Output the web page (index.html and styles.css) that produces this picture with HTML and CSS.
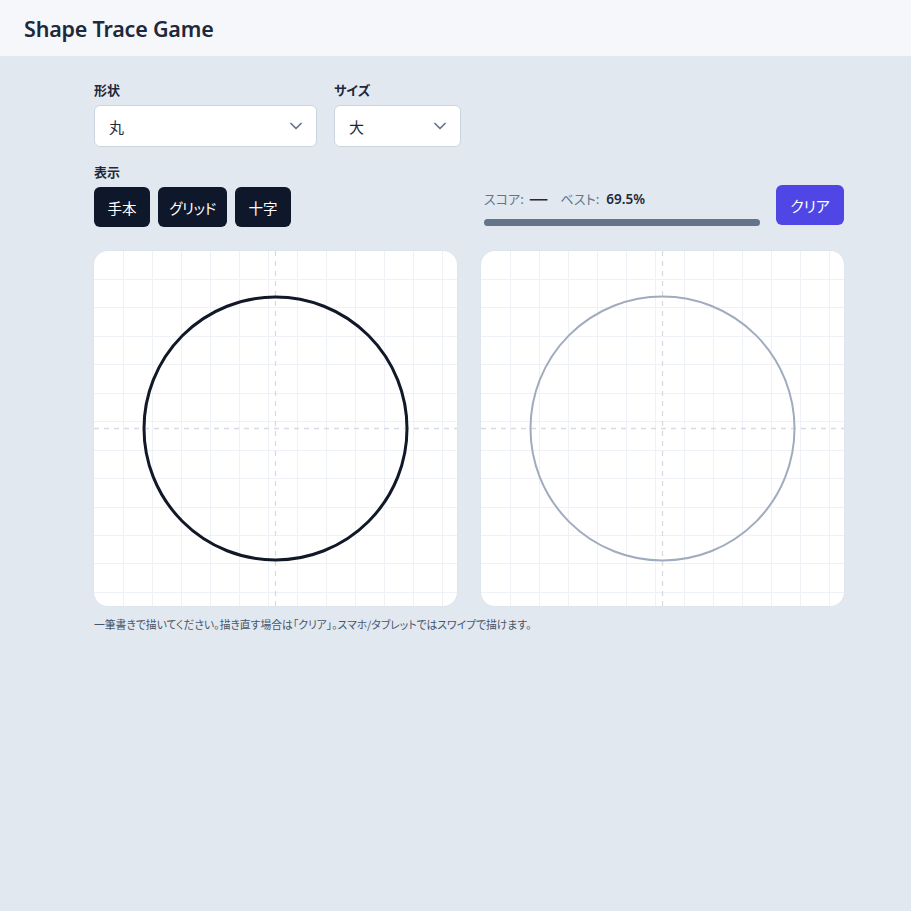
FILE: index.html
```html
<!DOCTYPE html>
<html lang="ja">
<head>
<meta charset="utf-8">
<title>Shape Trace Game</title>
<link rel="stylesheet" href="styles.css">
</head>
<body>
<header class="topbar"><h1 class="title">Shape Trace Game</h1></header>
<main class="wrap">
  <div class="row-fields">
    <div class="field">
      <label class="label">形状</label>
      <div class="select sel-shape"><span>丸</span>
        <svg class="chev" width="14" height="14" viewBox="0 0 14 14"><path d="M2 4.5 L7 9.5 L12 4.5" fill="none" stroke="#64748b" stroke-width="1.7" stroke-linecap="round" stroke-linejoin="round"/></svg>
      </div>
    </div>
    <div class="field">
      <label class="label">サイズ</label>
      <div class="select sel-size"><span>大</span>
        <svg class="chev" width="14" height="14" viewBox="0 0 14 14"><path d="M2 4.5 L7 9.5 L12 4.5" fill="none" stroke="#64748b" stroke-width="1.7" stroke-linecap="round" stroke-linejoin="round"/></svg>
      </div>
    </div>
  </div>
  <div class="row-controls">
    <div class="field">
      <label class="label">表示</label>
      <div class="toggles">
        <button class="tog">手本</button>
        <button class="tog tog-kana">グリッド</button>
        <button class="tog">十字</button>
      </div>
    </div>
    <div class="right">
      <div class="score">
        <div class="score-line"><span class="muted">スコア:</span><span class="dash">—</span><span class="muted">ベスト:</span><span class="best">69.5%</span></div>
        <div class="bar"></div>
      </div>
      <button class="clear">クリア</button>
    </div>
  </div>
  <div class="boards">
    <div class="board">
      <svg class="grid" width="363" height="355" viewBox="0 0 363 355">
        <g stroke="#eef1f5" stroke-width="1">
          <path d="M29.5 0V355M58.5 0V355M87.5 0V355M116.5 0V355M145.5 0V355M174.5 0V355M203.5 0V355M232.5 0V355M261.5 0V355M290.5 0V355M319.5 0V355M348.5 0V355"/>
          <path d="M0 28.5H363M0 56.5H363M0 85.5H363M0 113.5H363M0 142.5H363M0 170.5H363M0 199.5H363M0 227.5H363M0 256.5H363M0 284.5H363M0 312.5H363M0 341.5H363"/>
        </g>
        <g stroke="#d6dbe3" stroke-width="1.3" stroke-dasharray="5 5">
          <path d="M181.5 0V355"/>
          <path d="M0 177.5H363"/>
        </g>
        <circle cx="181.5" cy="177.5" r="131.5" fill="none" stroke="#111827" stroke-width="3"/>
      </svg>
    </div>
    <div class="board">
      <svg class="grid" width="363" height="355" viewBox="0 0 363 355">
        <g stroke="#eef1f5" stroke-width="1">
          <path d="M29.5 0V355M58.5 0V355M87.5 0V355M116.5 0V355M145.5 0V355M174.5 0V355M203.5 0V355M232.5 0V355M261.5 0V355M290.5 0V355M319.5 0V355M348.5 0V355"/>
          <path d="M0 28.5H363M0 56.5H363M0 85.5H363M0 113.5H363M0 142.5H363M0 170.5H363M0 199.5H363M0 227.5H363M0 256.5H363M0 284.5H363M0 312.5H363M0 341.5H363"/>
        </g>
        <g stroke="#d6dbe3" stroke-width="1.3" stroke-dasharray="5 5">
          <path d="M181.5 0V355"/>
          <path d="M0 177.5H363"/>
        </g>
        <circle cx="181.5" cy="177.5" r="132" fill="none" stroke="#a0acbe" stroke-width="2"/>
      </svg>
    </div>
  </div>
  <p class="note">一筆書きで描いてください。描き直す場合は「クリア」。スマホ/タブレットではスワイプで描けます。</p>
</main>
</body>
</html>
```

FILE: styles.css
```css
* { box-sizing: border-box; }
html, body { margin: 0; padding: 0; }
body {
  background: #e2e8f0;
  font-family: "Noto Sans", "Noto Sans CJK JP", sans-serif;
  color: #1e293b;
  min-height: 911px;
  font-feature-settings: "palt";
}
.topbar {
  background: #f6f7fb;
  height: 56px;
  display: flex;
  align-items: center;
  padding: 0 24px;
}
.title {
  margin: 0;
  font-size: 21.5px;
  font-weight: 600;
  color: #1e293b;
  letter-spacing: -0.2px;
}
.wrap {
  width: 750px;
  margin-left: 94px;
  padding-top: 24px;
}
.row-fields {
  display: flex;
  gap: 17px;
}
.field { display: flex; flex-direction: column; }
.label {
  font-family: "Noto Sans CJK JP", sans-serif;
  font-size: 13px;
  font-weight: 700;
  line-height: 19px;
  margin-bottom: 6px;
  color: #1e293b;
  font-feature-settings: "palt";
}
.select {
  height: 42px;
  background: #fff;
  border: 1px solid #cbd5e1;
  border-radius: 6px;
  display: flex;
  align-items: center;
  justify-content: space-between;
  padding: 0 13px 0 14px;
  font-family: "Noto Sans CJK JP", sans-serif;
  font-size: 15px;
  color: #1e293b;
}
.sel-shape { width: 223px; }
.sel-size { width: 127px; }
.row-controls {
  display: flex;
  justify-content: space-between;
  align-items: flex-end;
  margin-top: 15px;
}
.toggles { display: flex; gap: 8px; }
.tog {
  height: 40px;
  min-width: 56px;
  padding: 0 13px;
  border: 0;
  border-radius: 6px;
  background: #0f172a;
  color: #fff;
  font-family: "Noto Sans CJK JP", sans-serif;
  font-size: 14.5px;
  font-weight: 400;
  font-feature-settings: "palt";
}
.tog-kana {
  width: 69px;
  padding: 0;
  font-size: 14.5px;
  letter-spacing: -0.3px;
}
.right {
  display: flex;
  align-items: flex-end;
  gap: 16px;
  padding-bottom: 1px;
}
.score { width: 276px; }
.score-line {
  display: flex;
  align-items: center;
  font-size: 13px;
  line-height: 18px;
  height: 18px;
  margin-bottom: 11px;
}
.muted {
  font-family: "Noto Sans CJK JP", sans-serif;
  color: #64748b;
  font-feature-settings: "palt";
}
.dash {
  font-family: "Noto Sans CJK JP", sans-serif;
  font-size: 22px;
  line-height: 18px;
  font-weight: 400;
  color: #1e293b;
  margin: 0 12px 0 5px;
  font-feature-settings: normal;
  transform: translateY(-3px);
}
.best {
  font-size: 13.5px;
  font-weight: 600;
  color: #1e293b;
  margin-left: 7px;
}
.bar {
  height: 7px;
  border-radius: 4px;
  background: #64748b;
}
.clear {
  width: 68px;
  height: 40px;
  border: 0;
  border-radius: 6px;
  background: #4f46e5;
  color: #fff;
  font-family: "Noto Sans CJK JP", sans-serif;
  font-size: 15px;
  font-weight: 400;
  margin-bottom: 1px;
  font-feature-settings: "palt";
}
.boards {
  display: flex;
  gap: 24px;
  margin-top: 24px;
}
.board {
  width: 363px;
  height: 355px;
  background: #fff;
  border-radius: 14px;
  overflow: hidden;
  box-shadow: 0 0 0 1px #dfe5ed;
}
.grid { display: block; }
.note {
  margin: 10px 0 0;
  font-family: "Noto Sans CJK JP", sans-serif;
  font-size: 10.8px;
  color: #475569;
  font-feature-settings: "palt";
}
```
